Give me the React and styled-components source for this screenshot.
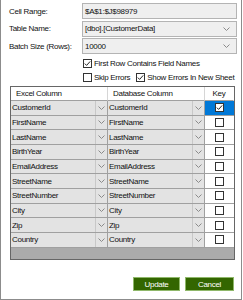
import React from 'react';
import styled, { createGlobalStyle } from 'styled-components';

const GlobalStyle = createGlobalStyle`
	body {
		margin: 0;
		background: #fff;
		font-family: "Liberation Sans", Arial, sans-serif;
		font-size: 8px;
		letter-spacing: -0.3px;
		color: #111;
	}
`;

const Window = styled.div`
	box-sizing: border-box;
	width: 242px;
	height: 300px;
	border: 1px solid #8c8c8c;
	border-top: none;
	display: flex;
	flex-direction: column;
`;

const Form = styled.div`
	display: grid;
	grid-template-columns: 73px 155px;
	row-gap: 1.5px;
	padding: 3px 0 0 8px;
	align-items: center;
`;

const Label = styled.div`
	white-space: nowrap;
`;

const Field = styled.div`
	box-sizing: border-box;
	height: 16px;
	display: flex;
	align-items: center;
	justify-content: space-between;
	padding: 0 6px 0 2px;
	background: #efefef;
	border: 1px solid #b4b4b4;
`;

const Chevron = ({ color = '#8a8a8a' }) => (
	<svg width="7" height="4" viewBox="0 0 7 4">
		<polyline points="0.5,0.5 3.5,3.5 6.5,0.5" fill="none" stroke={color} strokeWidth="1" />
	</svg>
);

const Box = ({ checked }) => (
	<svg width="9" height="9" viewBox="0 0 9 9">
		<rect x="0.5" y="0.5" width="8" height="8" fill="#fff" stroke="#333" />
		{checked && (
			<polyline points="1.8,4.6 3.6,6.4 7.2,2.4" fill="none" stroke="#222" strokeWidth="1" />
		)}
	</svg>
);

const Options = styled.div`
	display: flex;
	flex-direction: column;
	gap: 5px;
	padding: 5px 0 0 82px;
`;

const OptionRow = styled.div`
	display: flex;
	gap: 6px;
`;

const Check = styled.label`
	display: flex;
	align-items: center;
	gap: 2px;
	white-space: nowrap;
`;

const Grid = styled.div`
	margin: 4px 0 0 9px;
	width: 225px;
	box-sizing: border-box;
	border: 1px solid #666;
	background: #ababab;
	height: 174px;
	display: grid;
	grid-template-columns: 97px 97px 29px;
	grid-auto-rows: 14.67px;
	grid-template-rows: 14px;
	align-content: start;
`;

const HeadCell = styled.div`
	background: #fff;
	display: flex;
	align-items: center;
	justify-content: ${p => (p.center ? 'center' : 'flex-start')};
	padding-left: ${p => (p.center ? 0 : 5)}px;
	border-right: 1px solid ${p => (p.last ? '#fff' : '#d6d6d6')};
	border-bottom: 1px solid #a0a0a0;
`;

const ComboCell = styled.div`
	box-sizing: border-box;
	display: flex;
	align-items: center;
	background: #e3e3e3;
	border-right: 1px solid #a0a0a0;
	border-bottom: 1px solid #a0a0a0;
`;

const ComboText = styled.span`
	flex: 1;
	padding-left: 1px;
	white-space: nowrap;
	overflow: hidden;
`;

const ComboArrow = styled.span`
	width: 11px;
	align-self: stretch;
	display: flex;
	align-items: center;
	justify-content: center;
	border-left: 1px solid #c8c8c8;
`;

const KeyCell = styled.div`
	box-sizing: border-box;
	display: flex;
	align-items: center;
	justify-content: center;
	background: ${p => (p.selected ? '#0078d7' : '#fff')};
	border-bottom: 1px solid #a0a0a0;
`;

const Footer = styled.div`
	display: flex;
	justify-content: flex-end;
	gap: 5px;
	padding: 17px 7px 0 0;
`;

const Button = styled.button`
	box-sizing: border-box;
	width: ${p => p.w}px;
	height: 14px;
	padding: 0;
	border: 1px solid #8fb86a;
	background: #336600;
	color: #fff;
	font-family: inherit;
	font-size: 8px;
	letter-spacing: -0.3px;
`;

const columns = [
	'CustomerId',
	'FirstName',
	'LastName',
	'BirthYear',
	'EmailAddress',
	'StreetName',
	'StreetNumber',
	'City',
	'Zip',
	'Country',
];

const App = () => (
	<Window>
		<GlobalStyle />
		<Form>
			<Label>Cell Range:</Label>
			<Field>$A$1:$J$98979</Field>
			<Label>Table Name:</Label>
			<Field>
				[dbo].[CustomerData]
				<Chevron />
			</Field>
			<Label>Batch Size (Rows):</Label>
			<Field>
				10000
				<Chevron />
			</Field>
		</Form>
		<Options>
			<Check>
				<Box checked /> First Row Contains Field Names
			</Check>
			<OptionRow>
				<Check>
					<Box /> Skip Errors
				</Check>
				<Check>
					<Box checked /> Show Errors In New Sheet
				</Check>
			</OptionRow>
		</Options>
		<Grid>
			<HeadCell>Excel Column</HeadCell>
			<HeadCell>Database Column</HeadCell>
			<HeadCell center last>Key</HeadCell>
			{columns.map((name, i) => (
				<React.Fragment key={name}>
					<ComboCell>
						<ComboText>{name}</ComboText>
						<ComboArrow>
							<Chevron />
						</ComboArrow>
					</ComboCell>
					<ComboCell>
						<ComboText>{name}</ComboText>
						<ComboArrow>
							<Chevron />
						</ComboArrow>
					</ComboCell>
					<KeyCell selected={i === 0}>
						<Box checked={i === 0} />
					</KeyCell>
				</React.Fragment>
			))}
		</Grid>
		<Footer>
			<Button w={47}>Update</Button>
			<Button w={49}>Cancel</Button>
		</Footer>
	</Window>
);

export default App;
